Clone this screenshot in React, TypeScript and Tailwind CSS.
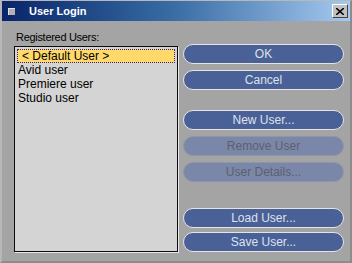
const users = ["< Default User >", "Avid user", "Premiere user", "Studio user"]

function PillButton({ label, disabled = false }: { label: string; disabled?: boolean }) {
  return (
    <div
      className={
        disabled
          ? "h-[20px] w-full rounded-full border border-[#8f96a8] bg-[#7b87a8] flex items-center justify-center text-[12px] text-[#5c6070]"
          : "h-[20px] w-full rounded-full border border-[#e4e4e4] bg-[#4a6197] flex items-center justify-center text-[12px] text-[#dde2ee]"
      }
    >
      {label}
    </div>
  )
}

export default function App() {
  return (
    <div
      className="w-[352px] h-[263px] bg-[#a4a4a4] flex flex-col border-l-2 border-t border-r-2 border-b-2 border-l-[#b8b8b8] border-t-[#b8b8b8] border-r-[#8c8c8c] border-b-[#8c8c8c] overflow-hidden"
      style={{ fontFamily: '"Liberation Sans", Arial, sans-serif' }}
    >
      {/* Title bar */}
      <div className="h-[20px] flex items-center bg-gradient-to-r from-[#0a246a] via-[#3a6ea5] to-[#a6caf0]">
        <div className="ml-[6px] w-[7px] h-[7px] bg-[#b0b0b0] border-t border-l border-[#e0e0e0] border-r-[#404040] border-b-[#404040]" />
        <span className="ml-[14px] text-[11px] font-bold text-white">User Login</span>
        <div className="ml-auto mr-[2px] w-[16px] h-[14px] bg-[#c0c0c0] border border-t-white border-l-white border-r-[#404040] border-b-[#404040] flex items-center justify-center">
          <svg width="8" height="7" viewBox="0 0 8 7">
            <path d="M0 0 L8 7 M8 0 L0 7" stroke="#000" strokeWidth="1.6" />
          </svg>
        </div>
      </div>

      <div className="flex flex-1 pl-[12px] pr-[6px]">
        {/* Left column */}
        <div className="w-[164px] flex flex-col">
          <div className="mt-[10px] ml-[2px] text-[11px] leading-[13px] text-black tracking-[-0.3px]">Registered Users:</div>
          <div className="mt-[2px] h-[206px] bg-[#d4d4d4] border border-[#0c0c0c] shadow-[1px_1px_0_#e8e8e8] pt-[2px] px-[2px]">
            {users.map((u, i) => (
              <div
                key={u}
                className={
                  i === 0
                    ? "h-[14px] leading-[12px] pl-[4px] text-[12px] text-black bg-[#ffd96b] border border-dotted border-[#30208a]"
                    : "h-[14px] leading-[14px] pl-[1px] text-[12px] text-black"
                }
              >
                {u}
              </div>
            ))}
          </div>
        </div>

        {/* Right column */}
        <div className="ml-[5px] w-[161px] flex flex-col pt-[23px]">
          <div className="flex flex-col gap-[6px]">
            <PillButton label="OK" />
            <PillButton label="Cancel" />
          </div>
          <div className="mt-[20px] flex flex-col gap-[6px]">
            <PillButton label="New User..." />
            <PillButton label="Remove User" disabled />
            <PillButton label="User Details..." disabled />
          </div>
          <div className="mt-[26px] flex flex-col gap-[4px]">
            <PillButton label="Load User..." />
            <PillButton label="Save User..." />
          </div>
        </div>
      </div>
    </div>
  )
}
